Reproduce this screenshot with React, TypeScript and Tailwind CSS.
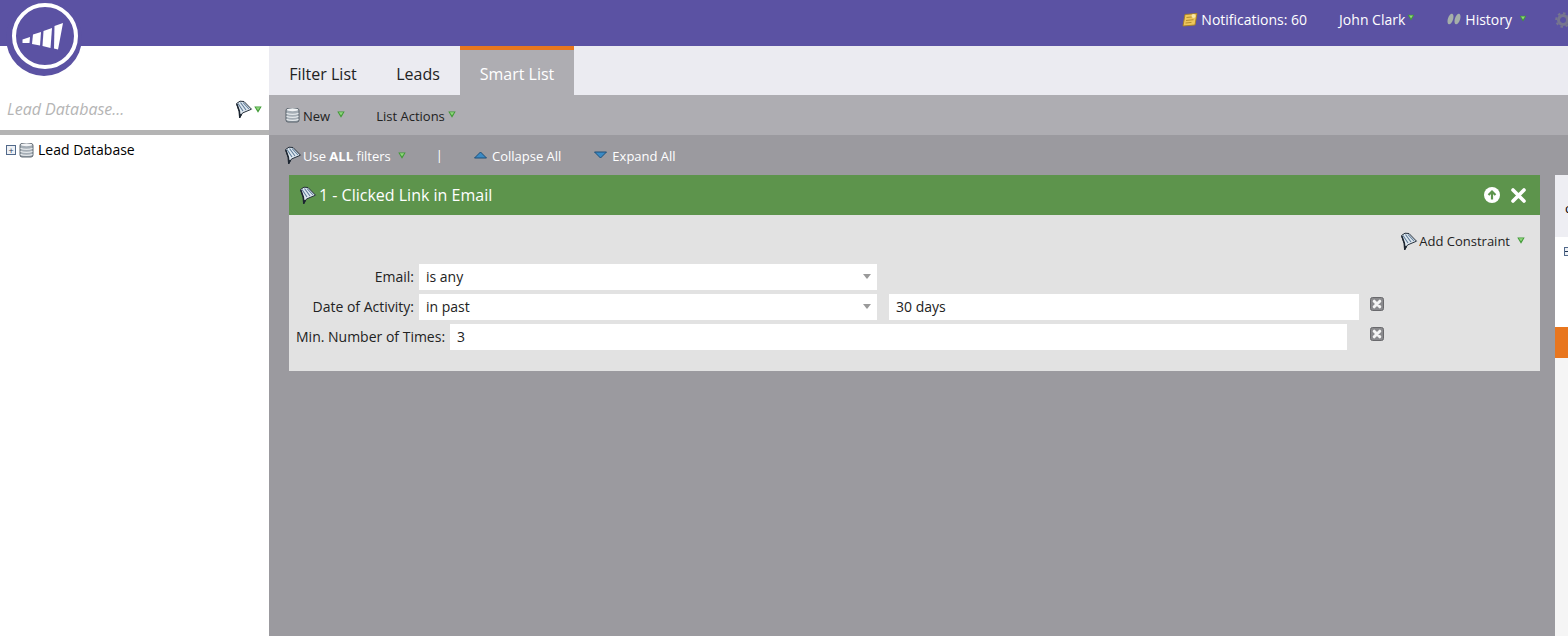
const FONT = "font-['Open_Sans',sans-serif]";

const Caret = ({ className = "" }: { className?: string }) => (
  <svg width="8" height="7" viewBox="0 0 8 7" className={`shrink-0 ${className}`}>
    <path d="M0.300 0.500h7.400L4 6.800z" fill="#3f9a35" />
    <path d="M1.800 1.300h4.400L4 4.500z" fill="#8fd67c" />
  </svg>
);

const Funnel = ({ className = "" }: { className?: string }) => (
  <svg width="18" height="19" viewBox="0 0 18 19" className={`shrink-0 ${className}`}>
    <path d="M1.500 3.500 5 1.200 9 1.500l7.500 7.700-5.500 2.300-3.500 1.500L4.500 18 4.300 11.500z" fill="#dfe8f0" stroke="#25303c" strokeWidth="1" strokeLinejoin="round" />
    <path d="M3 3.500 8 11M5.500 2.500l5.500 7.500M8 2.500l6 6.500" stroke="#5f7c98" strokeWidth="1.100" fill="none" />
    <path d="M1.800 4 4.400 11.500 4.800 17.500 6.300 14" stroke="#1c2530" strokeWidth="1.500" fill="none" />
  </svg>
);

const Database = () => (
  <svg width="15" height="16" viewBox="0 0 15 16" className="shrink-0">
    <rect x="1" y="1.500" width="13" height="13.500" rx="2" fill="#a4adb5" stroke="#4f5963" strokeWidth="0.900" />
    <ellipse cx="7.500" cy="2.800" rx="5.800" ry="1.500" fill="#f1f3f5" />
    <path d="M1.500 6.200c3 1.600 9 1.600 12 0M1.500 9.200c3 1.600 9 1.600 12 0M1.500 12.200c3 1.600 9 1.600 12 0" stroke="#e3e7ea" strokeWidth="1.200" fill="none" />
  </svg>
);

const RemoveButton = () => (
  <svg width="14" height="14" viewBox="0 0 14 14" className="shrink-0">
    <rect x="0.500" y="0.500" width="13" height="13" rx="2" fill="#8a8a8d" stroke="#69696c" />
    <path d="M4.200 4.200l5.600 5.600M9.800 4.200l-5.600 5.600" stroke="#f4f4f4" strokeWidth="3" strokeLinecap="round" />
  </svg>
);

const SelectBox = ({ value, width }: { value: string; width: string }) => (
  <div className={`flex h-[26px] ${width} items-center justify-between bg-white pb-[2px] pl-[7px] pr-[6px] text-[14px] text-[#222]`}>
    <span>{value}</span>
    <span className="h-0 w-0 border-x-[4px] border-t-[5px] border-x-transparent border-t-[#9a9a9a]" />
  </div>
);

const TextBox = ({ value, width }: { value: string; width: string }) => (
  <div className={`flex h-[26px] ${width} items-center bg-white pb-[2px] pl-[7px] text-[14px] text-[#222]`}>{value}</div>
);

export default function App() {
  return (
    <div className={`${FONT} flex h-[636px] w-[1568px] flex-col overflow-hidden bg-white`}>
      {/* top bar */}
      <div className="flex h-[46px] shrink-0 items-center justify-end bg-[#5b52a3] pb-[7px] text-[14px] text-white">
        <div className="flex items-center">
          <svg width="16" height="14" viewBox="0 0 16 14" className="mr-[3px]">
            <path d="M3 1.500 15 0.500 13 12 1 13z" fill="#eec65c" stroke="#a8801f" strokeWidth="0.900" />
            <path d="M4.500 4.500l7.500-.8M4 7.500l7.500-.8M3.500 10l6-.6" stroke="#a8801f" strokeWidth="0.800" />
            <circle cx="11.500" cy="3" r="2" fill="#f8e8a8" />
          </svg>
          <span>Notifications: 60</span>
        </div>
        <div className="ml-[32px] flex items-center">
          <span>John Clark</span>
          <Caret className="mb-[4px] ml-[2px] scale-90" />
        </div>
        <div className="ml-[31px] flex items-center">
          <svg width="16" height="14" viewBox="0 0 16 14" className="mr-[3px]">
            <ellipse cx="4.500" cy="6" rx="2.600" ry="5.500" transform="rotate(18 4.500 6)" fill="#a5afa9" />
            <ellipse cx="11.500" cy="6" rx="2.600" ry="5.500" transform="rotate(18 11.500 6)" fill="#a5afa9" />
          </svg>
          <span>History</span>
          <Caret className="mb-[3px] ml-[7px] scale-90" />
        </div>
        <svg width="16" height="16" viewBox="0 0 16 16" className="ml-[28px] mr-[-3px]">
          <circle cx="8" cy="8" r="4.500" fill="none" stroke="#76758f" strokeWidth="3" />
          <circle cx="8" cy="8" r="6.800" fill="none" stroke="#76758f" strokeWidth="2" strokeDasharray="2.600 2.700" />
        </svg>
      </div>

      <div className="flex min-h-0 flex-1">
        {/* sidebar */}
        <div className="relative flex w-[269px] shrink-0 flex-col bg-white">
          <div className="absolute left-[6px] top-[-46px] flex h-[76px] w-[76px] items-center justify-center rounded-full bg-[#5b52a3]">
            <div className="mb-[5px] ml-[1px] flex h-[66px] w-[66px] items-center justify-center rounded-full border-[4px] border-white">
              <svg width="42" height="28" viewBox="0 0 42 28" className="mr-[3px]">
                <path d="M0.500 17.500 8 15 7.500 21H0.500z" fill="#fff" />
                <path d="M11 12.500 19 10 18 23.500 10 22z" fill="#fff" />
                <path d="M21.500 9 30 6 28.500 26 20.500 24z" fill="#fff" />
                <path d="M32.500 4 41 1 36 27.500 32 26.500z" fill="#fff" />
              </svg>
            </div>
          </div>
          <div className="mb-[4px] mt-[45px] flex h-[35px] items-center justify-between pl-[7px] pr-[7px]">
            <span className="text-[16px] italic text-[#b5b5b5]">Lead Database...</span>
            <div className="mt-[2px] flex items-center gap-[1px]">
              <Funnel />
              <Caret />
            </div>
          </div>
          <div className="h-[5px] bg-[#b4b4b4]" />
          <div className="flex items-center pl-[6px] pt-[7px] text-[14px] leading-[16px] text-black">
            <span className="mr-[3px] flex h-[10px] w-[10px] items-center justify-center border border-[#52698a] bg-[#eef1f5] text-[9px] leading-none text-[#1f3554]">+</span>
            <Database />
            <span className="ml-[4px]">Lead Database</span>
          </div>
        </div>

        {/* main area */}
        <div className="flex min-w-0 flex-1 flex-col">
          <div className="flex h-[49px] shrink-0 bg-[#ebebf1] text-[16px] text-[#222]">
            <div className="flex w-[107px] items-center justify-center pl-[1px] pt-[7px]">Filter List</div>
            <div className="flex w-[84px] items-center justify-center pt-[7px]">Leads</div>
            <div className="flex w-[114px] items-center justify-center border-t-[4px] border-[#e8761e] bg-[#aeadb2] pt-[3px] text-white">Smart List</div>
          </div>

          <div className="flex h-[40px] shrink-0 items-center bg-[#aeadb2] pl-[16px] pt-[2px] text-[13px] text-[#222]">
            <div className="mb-[2px]"><Database /></div>
            <span className="ml-[3px] pt-[2px]">New</span>
            <Caret className="mb-[3px] ml-[7px]" />
            <span className="ml-[31px] pt-[2px]">List Actions</span>
            <Caret className="mb-[3px] ml-[3px]" />
          </div>

          <div className="relative min-h-0 flex-1 bg-[#9b9a9f]">
            <div className="flex h-[40px] items-center pl-[15px] pt-[2px] text-[13px] text-white">
              <div className="mb-[2px]"><Funnel /></div>
              <span className="ml-px pt-[2px]">Use <b>ALL</b> filters</span>
              <Caret className="mb-[2px] ml-[7px]" />
              <span className="ml-[30px]">|</span>
              <svg width="13" height="8" viewBox="0 0 13 8" className="mb-[3px] ml-[31px]">
                <path d="M6.500 1 12.500 7H.5z" fill="#3b8ac4" stroke="#1e4f78" />
              </svg>
              <span className="ml-[5px] pt-[2px]">Collapse All</span>
              <svg width="13" height="8" viewBox="0 0 13 8" className="mb-[3px] ml-[33px]">
                <path d="M6.500 7 12.500 1H.5z" fill="#3b8ac4" stroke="#1e4f78" />
              </svg>
              <span className="ml-[5px] pt-[2px]">Expand All</span>
            </div>

            {/* filter card */}
            <div className="ml-[20px] w-[1251px]">
              <div className="flex h-[40px] items-center justify-between bg-[#5d944c] pl-[10px] pr-[14px] text-white">
                <div className="flex items-center gap-[2px]">
                  <Funnel />
                  <span className="text-[16px]">1 - Clicked Link in Email</span>
                </div>
                <div className="flex items-center gap-[11px]">
                  <svg width="16" height="16" viewBox="0 0 16 16">
                    <circle cx="8" cy="8" r="8" fill="#fff" />
                    <path d="M8 12.500V4.500M4.500 8 8 4.500 11.500 8" fill="none" stroke="#5d944c" strokeWidth="2.200" />
                  </svg>
                  <svg width="15" height="15" viewBox="0 0 15 15">
                    <path d="M2 2l11 11M13 2 2 13" stroke="#fff" strokeWidth="3.600" strokeLinecap="round" />
                  </svg>
                </div>
              </div>
              <div className="h-[156px] bg-[#e2e2e2] text-[14px] text-[#222]">
                <div className="flex h-[49px] items-center justify-end pr-[15px] pt-[5px] text-[13px]">
                  <div className="mb-[2px]"><Funnel /></div>
                  <span className="ml-px">Add Constraint</span>
                  <Caret className="mb-[3px] ml-[7px]" />
                </div>
                <div className="flex flex-col gap-[4px]">
                  <div className="flex items-center">
                    <span className="w-[125px] pb-[2px] text-right">Email:</span>
                    <div className="ml-[5px]"><SelectBox value="is any" width="w-[458px]" /></div>
                  </div>
                  <div className="flex items-center">
                    <span className="w-[125px] pb-[2px] text-right">Date of Activity:</span>
                    <div className="ml-[5px]"><SelectBox value="in past" width="w-[458px]" /></div>
                    <div className="ml-[12px]"><TextBox value="30 days" width="w-[470px]" /></div>
                    <div className="mb-[6px] ml-[11px]"><RemoveButton /></div>
                  </div>
                  <div className="flex items-center">
                    <span className="ml-[7px] whitespace-nowrap pb-[2px]">Min. Number of Times:</span>
                    <div className="ml-[5px]"><TextBox value="3" width="w-[897px]" /></div>
                    <div className="mb-[6px] ml-[23px]"><RemoveButton /></div>
                  </div>
                </div>
              </div>
            </div>

            {/* clipped right panel */}
            <div className="absolute bottom-0 left-[1286px] top-[40px] w-[13px] overflow-hidden bg-[#f5f5f5]">
              <div className="h-[62px] bg-[#eeeef3] pl-[10px] pt-[23px] text-[13px] leading-[20px] text-black">c</div>
              <div className="h-[90px] bg-white pl-[9px] pt-[10px]">
                <div className="flex h-[9px] w-[9px] items-center border border-[#52698a] bg-[#eef1f5]">
                  <div className="h-px w-full bg-[#1f3554]" />
                </div>
              </div>
              <div className="h-[31px] bg-[#e8761e]" />
            </div>
          </div>
        </div>
      </div>
    </div>
  );
}
